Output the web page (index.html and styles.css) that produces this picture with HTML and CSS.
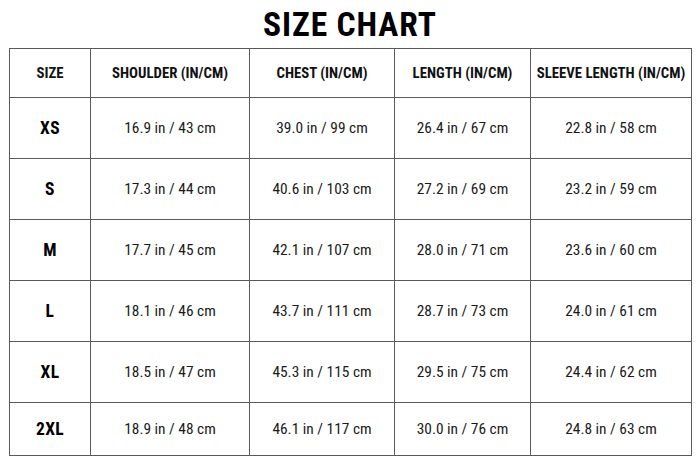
FILE: index.html
```html
<!DOCTYPE html>
<html>
<head>
<meta charset="utf-8">
<link rel="stylesheet" href="styles.css">
</head>
<body>
<div class="page">
  <h1 class="title">SIZE CHART</h1>
  <table class="chart">
    <colgroup>
      <col class="c1"><col class="c2"><col class="c3"><col class="c4"><col class="c5">
    </colgroup>
    <thead>
      <tr><th>SIZE</th><th>SHOULDER (IN/CM)</th><th>CHEST (IN/CM)</th><th>LENGTH (IN/CM)</th><th>SLEEVE LENGTH (IN/CM)</th></tr>
    </thead>
    <tbody>
      <tr><td class="sz">XS</td><td>16.9 in / 43 cm</td><td>39.0 in / 99 cm</td><td>26.4 in / 67 cm</td><td>22.8 in / 58 cm</td></tr>
      <tr><td class="sz">S</td><td>17.3 in / 44 cm</td><td>40.6 in / 103 cm</td><td>27.2 in / 69 cm</td><td>23.2 in / 59 cm</td></tr>
      <tr><td class="sz">M</td><td>17.7 in / 45 cm</td><td>42.1 in / 107 cm</td><td>28.0 in / 71 cm</td><td>23.6 in / 60 cm</td></tr>
      <tr><td class="sz">L</td><td>18.1 in / 46 cm</td><td>43.7 in / 111 cm</td><td>28.7 in / 73 cm</td><td>24.0 in / 61 cm</td></tr>
      <tr><td class="sz">XL</td><td>18.5 in / 47 cm</td><td>45.3 in / 115 cm</td><td>29.5 in / 75 cm</td><td>24.4 in / 62 cm</td></tr>
      <tr class="last"><td class="sz">2XL</td><td>18.9 in / 48 cm</td><td>46.1 in / 117 cm</td><td>30.0 in / 76 cm</td><td>24.8 in / 63 cm</td></tr>
    </tbody>
  </table>
</div>
</body>
</html>
```
FILE: styles.css
```css
html, body {
  margin: 0;
  padding: 0;
  background: #ffffff;
}
.page {
  padding: 8px 9px 0 9px;
  font-family: "Roboto Condensed", "DejaVu Sans Condensed", "Liberation Sans Narrow", "DejaVu Sans", sans-serif;
  font-stretch: condensed;
  color: #111;
}
.title {
  margin: 0;
  height: 40px;
  line-height: 34px;
  font-size: 33.5px;
  font-weight: bold;
  letter-spacing: 0.9px;
  text-align: center;
  color: #000;
}
.chart {
  width: 682px;
  border-collapse: collapse;
  table-layout: fixed;
}
.c1 { width: 81px; }
.c2 { width: 159px; }
.c3 { width: 145px; }
.c4 { width: 136px; }
.c5 { width: 161px; }
.chart th, .chart td {
  border: 1px solid #5a5a5a;
  text-align: center;
  padding: 0;
  white-space: nowrap;
}
.chart th {
  height: 48px;
  font-size: 14.8px;
  font-weight: bold;
  color: #111;
}
.chart td {
  height: 60px;
  font-size: 15.4px;
  color: #1a1a1a;
}
.chart tr.last td {
  height: 52px;
}
.chart td.sz {
  font-size: 17.5px;
  font-weight: bold;
  letter-spacing: 0.4px;
  color: #000;
}
```
